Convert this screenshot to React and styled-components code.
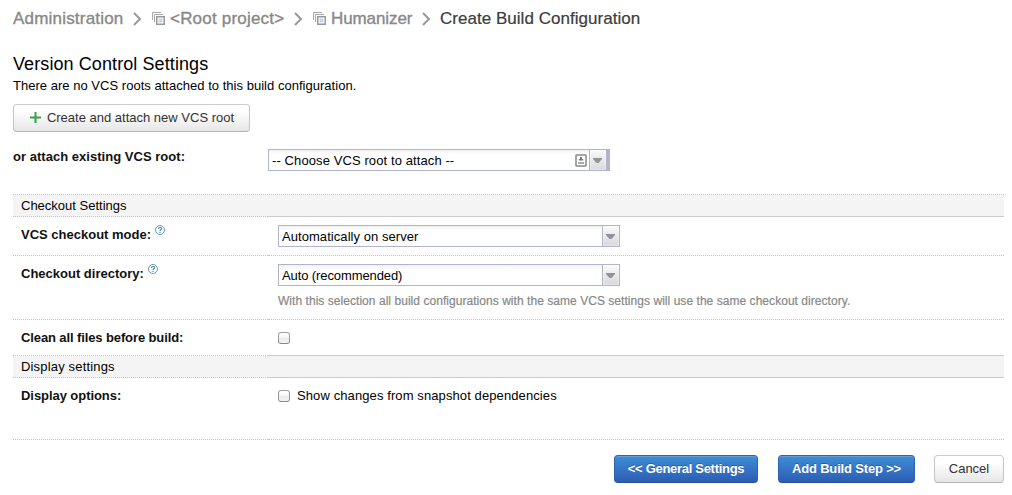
import React from 'react';
import styled, { createGlobalStyle, css } from 'styled-components';

const GlobalStyle = createGlobalStyle`
  * { box-sizing: border-box; }
  body {
    margin: 0;
    background: #fff;
    color: #000;
    font: 13px/16px "Helvetica Neue", "Liberation Sans", Arial, sans-serif;
  }
`;

const Page = styled.div`
  width: 1012px;
  height: 495px;
  padding: 0 8px 0 13px;
  overflow: hidden;
`;

const Text = styled.span`
  white-space: nowrap;
  letter-spacing: ${(p) => p.$ls || 0}px;
`;

const Breadcrumbs = styled.nav`
  display: flex;
  align-items: center;
  height: 37px;
  font-size: 17px;
  line-height: 20px;
`;

const Crumb = styled(Text)`
  flex: none;
  width: ${(p) => p.$w}px;
  color: ${(p) => (p.$current ? '#3c3c3c' : '#888')};
  -webkit-text-stroke: ${(p) => (p.$current ? 0.2 : 0.35)}px currentColor;
`;

const Chevron = styled.svg`
  flex: none;
  width: 9px;
  height: 14px;
  margin: 0 ${(p) => p.$after}px 0 10px;
`;

const ProjectGlyph = styled.svg`
  flex: none;
  width: 13px;
  height: 13px;
  margin: -1px 5px 0 0;
`;

const Title = styled.h2`
  margin: 16px 0 0;
  height: 24px;
  font-size: 18px;
  line-height: 22px;
  font-weight: normal;
`;

const Intro = styled.p`
  margin: 0;
  height: 27px;
  line-height: 17px;
`;

const Button = styled.button`
  display: flex;
  align-items: center;
  justify-content: center;
  width: ${(p) => p.$w}px;
  height: 28px;
  padding: 0 0 1px;
  border: 1px solid #bbb;
  border-color: #ccc #c4c4c4 #b5b5b5;
  border-radius: 4px;
  background: linear-gradient(#fff, #fff 25%, #e6e6e6);
  color: #333;
  font: inherit;

  ${(p) =>
    p.$primary &&
    css`
      border-color: #2967ae #2a62ab #234f93;
      background: linear-gradient(#3f8dd9, #2c5db2);
      box-shadow: inset 0 1px 0 rgba(255, 255, 255, 0.18);
      color: #fff;
      font-weight: bold;
      text-shadow: 0 -1px 0 rgba(0, 0, 0, 0.25);
    `}
`;

const PlusGlyph = styled.svg`
  width: 11px;
  height: 11px;
  margin: -1px 6px 0 1px;
`;

const AttachRow = styled.div`
  display: grid;
  grid-template-columns: 255px 1fr;
  height: 62px;
  padding-top: 17px;
`;

const Label = styled(Text)`
  font-weight: bold;
  color: #111;
`;

const Select = styled.div`
  display: flex;
  width: 342px;
  height: 22px;
  border: 1px solid #b2b4cc;
  border-right-width: ${(p) => (p.$thick ? 4 : 1)}px;
  background: linear-gradient(#f0f0f2, #fff 4px);
  line-height: 21px;
`;

const SelectValue = styled.div`
  flex: 1;
  display: flex;
  align-items: center;
  justify-content: space-between;
  padding: 0 2px 0 3px;
`;

const SelectArrow = styled.div`
  display: flex;
  align-items: center;
  justify-content: center;
  width: 17px;
  padding: 2px 1px 0 0;
  border-left: 1px solid #b2b4cc;
  background: linear-gradient(#fafafa, #d8d8dc);
  box-shadow: inset 0 0 0 1px rgba(255, 255, 255, 0.35);
`;

const FormTable = styled.div`
  border-top: 1px dotted #c4c4c4;
`;

const Row = styled.div`
  display: grid;
  grid-template-columns: 255px 1fr;
  height: ${(p) => p.$h}px;
  background: ${(p) => (p.$header ? '#f4f4f4' : 'transparent')};
`;

const Cell = styled.div`
  display: flex;
  align-items: ${(p) => (p.$top ? 'flex-start' : 'center')};
  padding: ${(p) => p.$pad || '0 0 0 8px'};
  border-bottom: 1px ${(p) => (p.$solid ? 'solid #ccc' : 'dotted #c4c4c4')};
`;

const Field = styled.div`
  display: flex;
  flex-direction: column;
`;

const Note = styled(Text)`
  margin-top: 8px;
  font-size: 12px;
  line-height: 14px;
  color: #888;
  -webkit-text-stroke: 0.2px currentColor;
`;

const HelpGlyph = styled.svg`
  width: 10px;
  height: 10px;
  margin: -2px 0 0 4px;
`;

const Check = styled.input`
  appearance: none;
  width: 12px;
  height: 12px;
  margin: ${(p) => p.$top}px 7px 0 0;
  border: 1px solid #999;
  border-color: #a0a0a0 #999 #888;
  border-radius: 3px;
  background: linear-gradient(#fff, #f7f7f7 45%, #e9e9e9 50%, #f5f5f5);
`;

const Footer = styled.footer`
  display: flex;
  justify-content: flex-end;
  padding-top: 15px;
`;

const FooterGap = styled.span`
  width: ${(p) => p.$w}px;
`;

const Separator = ({ after }) => (
  <Chevron $after={after} viewBox="0 0 9 14">
    <path d="M1 1 7 7 1 13" fill="none" stroke="#999" strokeWidth="2" />
  </Chevron>
);

const ProjectIcon = () => (
  <ProjectGlyph viewBox="0 0 13 13" fill="none">
    <path d="M.5 8V.5H9M2.5 10V2.5H11" stroke="#a8a8a8" />
    <path d="M4.75 4.75h7.5v7.5h-7.5z" fill="#fff" stroke="#999" strokeWidth="1.5" />
    <path d="M6.5 6.5h4v4h-4z" fill="#c3d8e8" />
  </ProjectGlyph>
);

const HelpIcon = () => (
  <HelpGlyph viewBox="0 0 10 10" fill="none" stroke="#4f8eab">
    <circle cx="5" cy="5" r="4.5" strokeWidth=".9" />
    <path d="M3.5 4C3.5 2 6.6 2 6.6 3.8 6.6 4.8 5 4.8 5 6M5 6.8V8" strokeWidth="1.2" />
  </HelpGlyph>
);

const Dropdown = ({ children, ls, thick }) => (
  <Select $thick={thick}>
    <SelectValue>
      <Text $ls={ls}>{children}</Text>
      {thick && (
        <svg width="12" height="13" viewBox="0 0 12 13">
          <rect x="1" y="1" width="10" height="11" rx=".6" fill="#fff" stroke="#888" strokeWidth="1.5" />
          <path d="M5 3h2v2h1.2v1.6H3.8V5H5z" fill="#777" />
          <path d="M3 8h6v2H3z" fill="#aaa" />
        </svg>
      )}
    </SelectValue>
    <SelectArrow>
      <svg width="9" height="6" viewBox="0 0 9 6">
        <path d="M0 0h9v1L5.5 5h-2L0 1z" fill="#909299" />
      </svg>
    </SelectArrow>
  </Select>
);

const SectionHeader = ({ children, h, ls }) => (
  <Row $h={h} $header>
    <Cell>
      <Text $ls={ls}>{children}</Text>
    </Cell>
    <Cell $solid />
  </Row>
);

export default function App() {
  return (
    <Page>
      <GlobalStyle />
      <Breadcrumbs>
        <Crumb $w={110} $ls={0.2}>Administration</Crumb>
        <Separator after={10} />
        <ProjectIcon />
        <Crumb $w={114} $ls={0.2}>&lt;Root project&gt;</Crumb>
        <Separator after={10} />
        <ProjectIcon />
        <Crumb $w={81} $ls={-0.1}>Humanizer</Crumb>
        <Separator after={9} />
        <Crumb $current $ls={0.03}>Create Build Configuration</Crumb>
      </Breadcrumbs>

      <Title>
        <Text $ls={0.09}>Version Control Settings</Text>
      </Title>
      <Intro>
        <Text $ls={0.025}>There are no VCS roots attached to this build configuration.</Text>
      </Intro>
      <Button $w={237}>
        <PlusGlyph viewBox="0 0 11 11">
          <path d="M5.5 0v11M0 5.5h11" stroke="#3a9f4b" strokeWidth="2" />
        </PlusGlyph>
        <Text>Create and attach new VCS root</Text>
      </Button>

      <AttachRow>
        <Label $ls={0.03}>or attach existing VCS root:</Label>
        <Dropdown thick ls={0.1}>-- Choose VCS root to attach --</Dropdown>
      </AttachRow>

      <FormTable>
        <SectionHeader h={22}>Checkout Settings</SectionHeader>
        <Row $h={39}>
          <Cell $top $pad="10px 0 0 8px">
            <Label>VCS checkout mode:</Label>
            <HelpIcon />
          </Cell>
          <Cell $top $pad="8px 0 0 10px">
            <Dropdown ls={0.06}>Automatically on server</Dropdown>
          </Cell>
        </Row>
        <Row $h={64}>
          <Cell $top $pad="10px 0 0 8px">
            <Label>Checkout directory:</Label>
            <HelpIcon />
          </Cell>
          <Cell $top $pad="8px 0 0 10px">
            <Field>
              <Dropdown ls={-0.1}>Auto (recommended)</Dropdown>
              <Note $ls={0.045}>
                With this selection all build configurations with the same VCS settings will use the same checkout directory.
              </Note>
            </Field>
          </Cell>
        </Row>
        <Row $h={36}>
          <Cell $pad="1px 0 0 8px">
            <Label $ls={-0.11}>Clean all files before build:</Label>
          </Cell>
          <Cell $solid $pad="1px 0 0 10px">
            <Check type="checkbox" $top={-1} />
          </Cell>
        </Row>
        <SectionHeader h={22} ls={0.17}>Display settings</SectionHeader>
        <Row $h={62}>
          <Cell $top $pad="10px 0 0 8px">
            <Label $ls={-0.06}>Display options:</Label>
          </Cell>
          <Cell $top $pad="10px 0 0 10px">
            <Check type="checkbox" $top={2} />
            <Text $ls={0.1}>Show changes from snapshot dependencies</Text>
          </Cell>
        </Row>
      </FormTable>

      <Footer>
        <Button $primary $w={144}>
          <Text $ls={-0.3}>&lt;&lt; General Settings</Text>
        </Button>
        <FooterGap $w={20} />
        <Button $primary $w={137}>
          <Text $ls={-0.17}>Add Build Step &gt;&gt;</Text>
        </Button>
        <FooterGap $w={19} />
        <Button $w={70}>
          <Text>Cancel</Text>
        </Button>
      </Footer>
    </Page>
  );
}
